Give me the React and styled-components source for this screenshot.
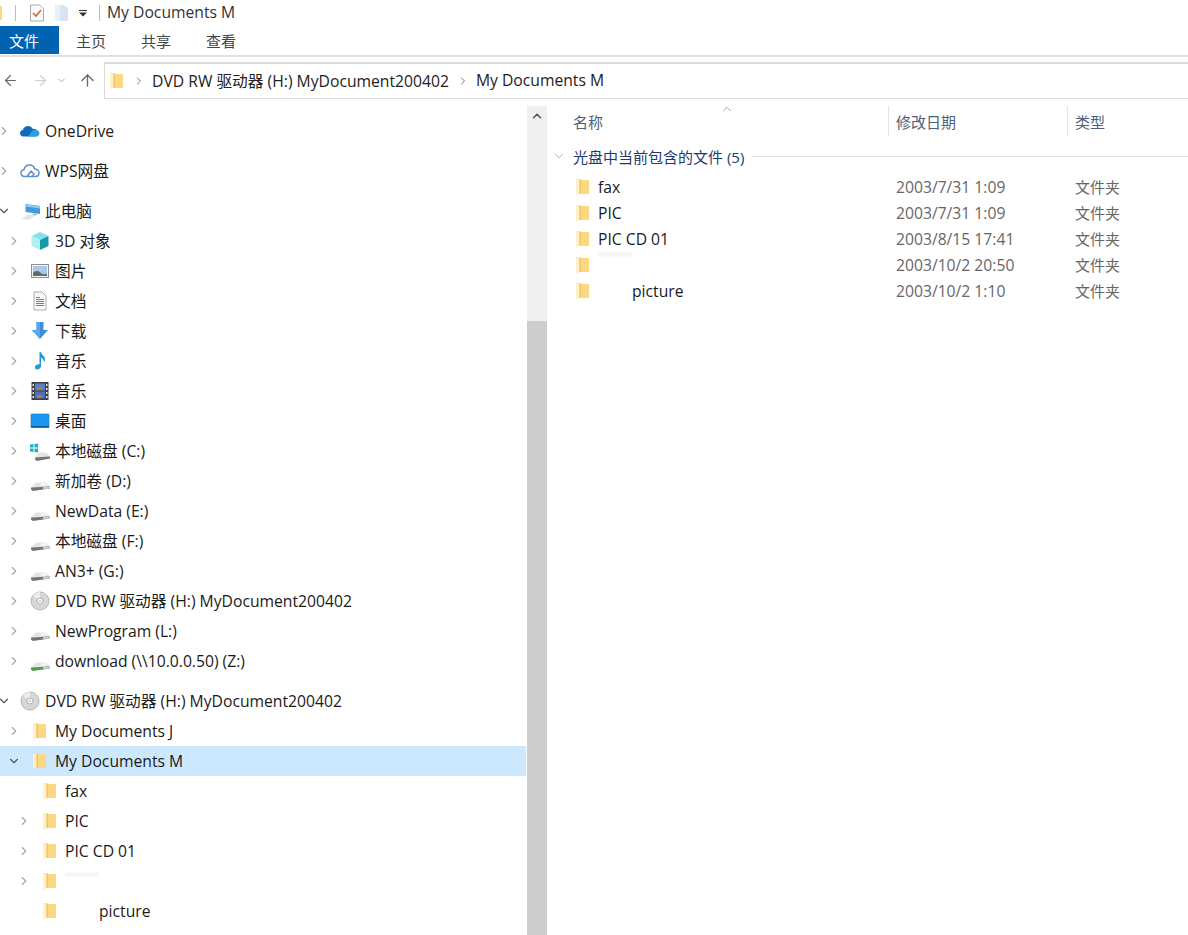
import React from "react";
import styled, { createGlobalStyle } from "styled-components";
import { ArrowLeft, ArrowRight, ArrowUp, ChevronDown, ChevronRight, ChevronUp } from "lucide-react";

const Global = createGlobalStyle`
  html, body { margin: 0; padding: 0; height: 100%; overflow: hidden; background: #fff; }
  body { font-family: "Open Sans", "Noto Sans CJK SC", sans-serif; font-size: 15.7px; color: #1a1a1a; }
  * { box-sizing: border-box; }
`;

const Window = styled.div`
  width: 1188px;
  height: 935px;
  display: flex;
  flex-direction: column;
  overflow: hidden;
`;

const TitleBar = styled.div`
  height: 26px;
  display: flex;
  align-items: center;
  flex: none;
`;
const TitleIcon = styled.span`
  display: flex;
  margin-left: ${({ left }) => left}px;
`;
const TitleSep = styled.span`
  width: 1px;
  height: 16px;
  background: #bdbdbd;
  margin-left: ${({ left }) => left}px;
`;
const TitleText = styled.span`
  margin-left: 7px;
  margin-top: -3px;
  color: #333;
`;

const Ribbon = styled.div`
  height: 31px;
  flex: none;
  display: flex;
  border-bottom: 2px solid #e1e1e1;
  padding-bottom: 1px;
`;
const FileTab = styled.div`
  width: 59px;
  padding-left: 9px;
  background: #0063b1;
  color: #fff;
  display: flex;
  align-items: center;
  font-size: 15px;
`;
const Tab = styled.div`
  margin-left: ${({ left }) => left}px;
  display: flex;
  align-items: center;
  font-size: 15px;
  color: #444;
`;

const AddressRow = styled.div`
  height: 43px;
  flex: none;
  display: flex;
  align-items: center;
  padding-top: 4px;
`;
const NavButton = styled.span`
  display: flex;
  margin-left: ${({ left }) => left}px;
  color: ${({ tone }) => tone};
`;
const AddressBox = styled.div`
  margin-left: 7px;
  flex: 1;
  margin-right: -4px;
  height: 37px;
  border: 1px solid #d9d9d9;
  border-top-width: 2px;
  display: flex;
  align-items: center;
  padding-left: 3px;
`;
const Crumb = styled.span`
  margin-left: ${({ left }) => left}px;
  margin-top: -2px;
  color: #222;
`;
const CrumbArrow = styled(ChevronRight)`
  margin-left: ${({ left }) => left}px;
  color: #777;
  flex: none;
`;

const Body = styled.div`
  flex: 1;
  display: flex;
  min-height: 0;
  padding-top: 6px;
`;

const NavPane = styled.div`
  width: 527px;
  flex: none;
  padding-top: 10px;
  display: flex;
  flex-direction: column;
  gap: 10px;
`;
const NavGroup = styled.div`
  display: flex;
  flex-direction: column;
`;
const NavRow = styled.div`
  height: 30px;
  flex: none;
  margin-right: 1px;
  display: flex;
  align-items: center;
  padding-left: ${({ level }) => level * 10}px;
  background: ${({ selected }) => (selected ? "#cce8ff" : "transparent")};
`;
const Twisty = styled.span`
  width: 20px;
  flex: none;
  display: flex;
  justify-content: center;
  margin-left: -6px;
  margin-right: 6px;
  color: ${({ open }) => (open ? "#555" : "#a6a6a6")};
`;
const IconSlot = styled.span`
  width: 20px;
  height: 20px;
  flex: none;
  display: flex;
  align-items: center;
  justify-content: center;
`;
const NavLabel = styled.span`
  margin-left: 5px;
  margin-top: -1px;
  padding-left: ${({ inset }) => inset || 0}px;
  white-space: nowrap;
  position: relative;
`;
const Smudge = styled.span`
  position: absolute;
  left: ${({ left }) => left}px;
  top: ${({ top }) => top}px;
  width: 34px;
  height: 3px;
  background: #f1f1f1;
  filter: blur(1px);
`;

const ScrollBar = styled.div`
  width: 20px;
  flex: none;
  background: #f0f0f0;
  display: flex;
  flex-direction: column;
`;
const ScrollUp = styled.div`
  height: 20px;
  display: flex;
  align-items: center;
  justify-content: center;
  color: #505050;
`;
const ScrollGap = styled.div`
  height: 195px;
`;
const ScrollThumb = styled.div`
  flex: 1;
  background: #cdcdcd;
`;

const ListPane = styled.div`
  flex: 1;
  min-width: 0;
  padding-left: 1px;
  display: flex;
  flex-direction: column;
`;
const HeaderRow = styled.div`
  height: 30px;
  flex: none;
  display: flex;
  position: relative;
  color: #4c607a;
  font-size: 15px;
`;
const SortCaret = styled(ChevronUp)`
  position: absolute;
  left: 172px;
  top: -4px;
  color: #999;
`;
const HeaderCell = styled.div`
  width: ${({ width }) => width}px;
  flex: none;
  padding-left: ${({ pad }) => pad}px;
  display: flex;
  align-items: center;
  border-left: ${({ sep }) => (sep ? "1px solid #e5e5e5" : "none")};
`;
const GroupHeader = styled.div`
  margin-top: 5px;
  height: 30px;
  flex: none;
  display: flex;
  align-items: center;
  padding-left: 4px;
  color: #1e3a6e;
`;
const GroupLabel = styled.span`
  margin-left: 7px;
  font-size: 15px;
  white-space: nowrap;
`;
const GroupLine = styled.span`
  flex: 1;
  height: 1px;
  margin-left: 8px;
  background: #e2e2e2;
`;
const FileList = styled.div`
  margin-top: 3px;
  display: flex;
  flex-direction: column;
`;
const FileRow = styled.div`
  height: 26px;
  display: flex;
  align-items: center;
`;
const FileName = styled.div`
  width: 348px;
  flex: none;
  display: flex;
  align-items: center;
  padding-left: 26px;
`;
const FileText = styled.span`
  margin-left: 6px;
  padding-left: ${({ inset }) => inset || 0}px;
  position: relative;
`;
const FileDate = styled.div`
  width: 179px;
  flex: none;
  color: #666;
`;
const FileType = styled.div`
  color: #666;
  font-size: 15px;
  margin-top: -2px;
`;

const Folder = ({ size = 18 }) => (
  <svg width={size} height={size} viewBox="0 0 18 18">
    <path d="M2 1h3.500l1 1H15v14H5l-3 1z" fill="#fbd982" />
    <path d="M2 1.500 5.500 1v15L2 17z" fill="#fff0c9" />
    <path d="M5.500 1.500h1.500v14.500H5.500z" fill="#f3c566" />
  </svg>
);

const Drive = ({ base = "#747474" }) => (
  <svg width="20" height="20" viewBox="0 0 20 20">
    <path d="M1 16.500 6 11.500h10l4 4v1z" fill="#e4e4e4" />
    <path d="M1 16.500l19-1v2L3 20 1 18.500z" fill={base} />
    <path d="M13 16l7-.500v2l-7 1z" fill="#c9c9c9" />
    <ellipse cx="14" cy="13.500" rx="3.500" ry="1.200" fill="#f7f7f7" />
  </svg>
);

const WinDrive = () => (
  <svg width="20" height="20" viewBox="0 0 20 20">
    <path d="M5 16.500 9 11.500h7l4 4v1z" fill="#e4e4e4" />
    <path d="M5 16.500l15-1v2L7 20l-2-1.500z" fill="#747474" />
    <path d="M0 3.500l3.500-.5v3.500H0zM4.500 3l3.500-.5v4H4.500zM0 7.500h3.500V11L0 10.500zM4.500 7.500H8v4l-3.500-.5z" fill="#12b5c9" />
  </svg>
);

const Disc = () => (
  <svg width="20" height="20" viewBox="0 0 20 20">
    <circle cx="10" cy="10" r="9" fill="#d6d6d6" stroke="#a8a8a8" strokeWidth="0.8" />
    <path d="M10 10 3 5a9 9 0 0 1 7-4z" fill="#ececec" />
    <circle cx="10" cy="10" r="3" fill="#f6f6f6" stroke="#a3a3a3" strokeWidth="0.8" />
    <circle cx="10" cy="10" r="1" fill="#c5c5c5" />
  </svg>
);

const OneDrive = () => (
  <svg width="20" height="20" viewBox="0 0 20 20">
    <path d="M3.500 15.500C1 15.500 0 13.600 0 12.200c0-1.800 1.400-3 2.900-3.200C3.600 6.600 5.600 5 8 5c2 0 3.700 1.100 4.500 2.700 2.900-.3 5 1.200 6 3.300.7 2.200-.7 4.500-3 4.500z" fill="#0f6cbd" />
    <path d="M8 15.500 12 10c2-2 5.500-1.500 7 1 1.200 2-.2 4.500-3 4.500z" fill="#2b9de3" />
  </svg>
);

const WpsCloud = () => (
  <svg width="20" height="20" viewBox="0 0 20 20" fill="none" stroke="#5f8ed8" strokeWidth="1.500" strokeLinejoin="round">
    <path d="M5 15.500C2.500 15.500 1 13.800 1 12c0-1.700 1.200-3 3-3.200C4.500 6 6.800 4 9.500 4c2.500 0 4.500 1.600 5.200 4 2.500.3 4.300 1.900 4.300 4 0 2-1.500 3.500-3.800 3.500z" />
    <path d="M7 15.500 11 10l3 3-2 2.500" />
  </svg>
);

const Computer = () => (
  <svg width="20" height="20" viewBox="0 0 20 20">
    <path d="M5.500 3 20.500 5v8L5.500 11z" fill="#3f9be0" />
    <path d="M6 3.500 20 5.400v2L6 5.500z" fill="#8fd0f5" />
    <path d="M1 18l7-4.500 7 1-6 4.500z" fill="#e3e6e8" />
    <path d="M12 13l5-.5v1.500l-3 .6z" fill="#a9b3ba" />
  </svg>
);

const Cube = () => (
  <svg width="20" height="20" viewBox="0 0 20 20">
    <path d="M10 1 18.500 5 10 9 1.500 5z" fill="#7fe3ea" />
    <path d="M1.500 5 10 9v10l-8.500-4z" fill="#b5eef0" />
    <path d="M18.500 5 10 9v10l8.500-4z" fill="#149aa8" />
  </svg>
);

const Picture = () => (
  <svg width="20" height="20" viewBox="0 0 20 20">
    <rect x="1.500" y="3.500" width="17" height="13" fill="#f4f6f8" stroke="#8a8f94" />
    <rect x="3" y="5" width="14" height="10" fill="#a9c8e6" />
    <path d="M3 12c3-3 6-2 8 0s4 1 6 .5V15H3z" fill="#5d6d70" />
  </svg>
);

const Doc = () => (
  <svg width="20" height="20" viewBox="0 0 20 20">
    <path d="M4 1h8l4 4v14H4z" fill="#f7f7f7" stroke="#9a9a9a" strokeWidth="0.8" />
    <path d="M6 6h4v1H6zM6 8h8v1H6zM6 10h8v1H6zM6 12h8v1H6zM6 14h8v1H6z" fill="#3f8fc6" />
  </svg>
);

const Download = () => (
  <svg width="20" height="20" viewBox="0 0 20 20">
    <path d="M6.500 1h7v8H18l-8 9-8-9h4.500z" fill="#3b8fdc" />
    <path d="M6.500 1h3.500v17l-8-9h4.500z" fill="#5aa8ea" />
  </svg>
);

const Music = () => (
  <svg width="20" height="20" viewBox="0 0 20 20">
    <path d="M9.500 1h1.500c.5 3 4 4 4 7.500 0 1-.4 2-1 2.800.2-2.500-2-4-3-4.500V15c0 2-2 3.500-4 3.500S5 17.500 5 16c0-1.800 2-3 4.500-2.800z" fill="#1e9ad6" />
  </svg>
);

const Film = () => (
  <svg width="20" height="20" viewBox="0 0 20 20">
    <rect x="1.500" y="1" width="17" height="18" fill="#3b3f46" />
    <rect x="5" y="2.500" width="10" height="7" fill="#5b7fc2" />
    <rect x="5" y="10.500" width="10" height="7" fill="#4a70b8" />
    <path d="M7 6h5v3H7zM7 14h5v3H7z" fill="#c2763d" />
    <path d="M2.500 3h1.500v2H2.500zM2.500 7h1.500v2H2.500zM2.500 11h1.500v2H2.500zM2.500 15h1.500v2H2.500zM16 3h1.500v2H16zM16 7h1.500v2H16zM16 11h1.500v2H16zM16 15h1.500v2H16z" fill="#e4e4e4" />
  </svg>
);

const Desktop = () => (
  <svg width="20" height="20" viewBox="0 0 20 20">
    <rect x="1" y="3" width="18" height="13.500" rx="0.500" fill="#1a96f0" stroke="#1572b8" strokeWidth="0.600" />
    <rect x="1" y="15" width="18" height="1.500" fill="#0f5f9e" />
  </svg>
);

const Checklist = () => (
  <svg width="16" height="18" viewBox="0 0 16 18">
    <path d="M1.500 1h9l4 4v12h-13z" fill="#fbfbfb" stroke="#a8a8a8" />
    <path d="M4 9l3 3 5-6" fill="none" stroke="#d8603c" strokeWidth="1.600" />
  </svg>
);

const BlankDoc = () => (
  <svg width="13" height="18" viewBox="0 0 13 18">
    <path d="M0 1h9l4 3v13H0z" fill="#d9e4f2" />
    <path d="M0 1h5v16H0z" fill="#e9eff7" />
  </svg>
);

const Dropdown = () => (
  <svg width="8" height="8" viewBox="0 0 8 8">
    <path d="M0 1h8v1H0zM0 3.500h8L4 7.500z" fill="#333" />
  </svg>
);

const closed = <ChevronRight size={14} strokeWidth={2} />;
const open = <ChevronDown size={14} strokeWidth={2} />;

const devices = [
  ["3D 对象", <Cube />],
  ["图片", <Picture />],
  ["文档", <Doc />],
  ["下载", <Download />],
  ["音乐", <Music />],
  ["音乐", <Film />],
  ["桌面", <Desktop />],
  ["本地磁盘 (C:)", <WinDrive />],
  ["新加卷 (D:)", <Drive />],
  ["NewData (E:)", <Drive />],
  ["本地磁盘 (F:)", <Drive />],
  ["AN3+ (G:)", <Drive />],
  ["DVD RW 驱动器 (H:) MyDocument200402", <Disc />],
  ["NewProgram (L:)", <Drive />],
  ["download (\\\\10.0.0.50) (Z:)", <Drive base="#4e9a54" />],
];

const files = [
  { name: "fax", date: "2003/7/31 1:09" },
  { name: "PIC", date: "2003/7/31 1:09" },
  { name: "PIC CD 01", date: "2003/8/15 17:41" },
  { name: "", date: "2003/10/2 20:50" },
  { name: "picture", date: "2003/10/2 1:10", inset: 34 },
];

function Item({ level = 0, arrow = "closed", icon, label, selected, inset, children }) {
  return (
    <NavRow level={level} selected={selected}>
      <Twisty open={arrow === "open"}>{arrow === "open" ? open : arrow === "closed" ? closed : null}</Twisty>
      <IconSlot>{icon}</IconSlot>
      <NavLabel inset={inset}>
        {label}
        {children}
      </NavLabel>
    </NavRow>
  );
}

export default function App() {
  return (
    <Window>
      <Global />
      <TitleBar>
        <TitleIcon left={-13}>
          <Folder />
        </TitleIcon>
        <TitleSep left={10} />
        <TitleIcon left={13}>
          <Checklist />
        </TitleIcon>
        <TitleIcon left={10}>
          <BlankDoc />
        </TitleIcon>
        <TitleIcon left={11}>
          <Dropdown />
        </TitleIcon>
        <TitleSep left={12} />
        <TitleText>My Documents M</TitleText>
      </TitleBar>
      <Ribbon>
        <FileTab>文件</FileTab>
        <Tab left={17}>主页</Tab>
        <Tab left={35}>共享</Tab>
        <Tab left={35}>查看</Tab>
      </Ribbon>
      <AddressRow>
        <NavButton left={2} tone="#666">
          <ArrowLeft size={17} strokeWidth={1.700} />
        </NavButton>
        <NavButton left={13} tone="#cfcfcf">
          <ArrowRight size={17} strokeWidth={1.700} />
        </NavButton>
        <NavButton left={7} tone="#a0a0a0">
          <ChevronDown size={11} strokeWidth={2} />
        </NavButton>
        <NavButton left={11} tone="#666">
          <ArrowUp size={19} strokeWidth={1.700} />
        </NavButton>
        <AddressBox>
          <Folder />
          <CrumbArrow size={12} left={7} />
          <Crumb left={7}>DVD RW 驱动器 (H:) MyDocument200402</Crumb>
          <CrumbArrow size={12} left={8} />
          <Crumb left={7}>My Documents M</Crumb>
        </AddressBox>
      </AddressRow>
      <Body>
        <NavPane>
          <NavGroup>
            <Item icon={<OneDrive />} label="OneDrive" />
          </NavGroup>
          <NavGroup>
            <Item icon={<WpsCloud />} label="WPS网盘" />
          </NavGroup>
          <NavGroup>
            <Item arrow="open" icon={<Computer />} label="此电脑" />
            {devices.map(([label, icon], i) => (
              <Item key={i} level={1} icon={icon} label={label} />
            ))}
          </NavGroup>
          <NavGroup>
            <Item arrow="open" icon={<Disc />} label="DVD RW 驱动器 (H:) MyDocument200402" />
            <Item level={1} icon={<Folder />} label="My Documents J" />
            <Item level={1} arrow="open" selected icon={<Folder />} label="My Documents M" />
            <Item level={2} arrow="none" icon={<Folder />} label="fax" />
            <Item level={2} icon={<Folder />} label="PIC" />
            <Item level={2} icon={<Folder />} label="PIC CD 01" />
            <Item level={2} icon={<Folder />} label="">
              <Smudge left={0} top={-8} />
            </Item>
            <Item level={2} arrow="none" icon={<Folder />} label="picture" inset={34} />
          </NavGroup>
        </NavPane>
        <ScrollBar>
          <ScrollUp>
            <ChevronUp size={14} strokeWidth={2.500} />
          </ScrollUp>
          <ScrollGap />
          <ScrollThumb />
        </ScrollBar>
        <ListPane>
          <HeaderRow>
            <SortCaret size={14} strokeWidth={1.500} />
            <HeaderCell width={340} pad={25}>名称</HeaderCell>
            <HeaderCell width={179} pad={7} sep>修改日期</HeaderCell>
            <HeaderCell width={120} pad={7} sep>类型</HeaderCell>
          </HeaderRow>
          <GroupHeader>
            <ChevronDown size={14} strokeWidth={1} color="#777" />
            <GroupLabel>光盘中当前包含的文件 (5)</GroupLabel>
            <GroupLine />
          </GroupHeader>
          <FileList>
            {files.map((f) => (
              <FileRow key={f.date}>
                <FileName>
                  <Folder />
                  <FileText inset={f.inset}>
                    {f.name}
                    {!f.name && <Smudge left={0} top={-12} />}
                  </FileText>
                </FileName>
                <FileDate>{f.date}</FileDate>
                <FileType>文件夹</FileType>
              </FileRow>
            ))}
          </FileList>
        </ListPane>
      </Body>
    </Window>
  );
}
